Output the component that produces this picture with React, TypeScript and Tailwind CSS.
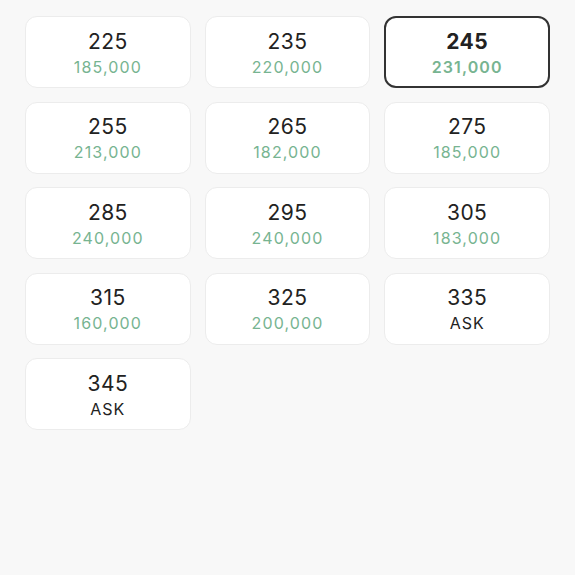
const sizes: { size: string; price: string | null; active?: boolean }[] = [
  { size: "225", price: "185,000" },
  { size: "235", price: "220,000" },
  { size: "245", price: "231,000", active: true },
  { size: "255", price: "213,000" },
  { size: "265", price: "182,000" },
  { size: "275", price: "185,000" },
  { size: "285", price: "240,000" },
  { size: "295", price: "240,000" },
  { size: "305", price: "183,000" },
  { size: "315", price: "160,000" },
  { size: "325", price: "200,000" },
  { size: "335", price: null },
  { size: "345", price: null },
];

function SizeCard({ size, price, active }: { size: string; price: string | null; active?: boolean }) {
  return (
    <button
      className={
        active
          ? "flex h-[72px] flex-col items-center justify-center rounded-[12px] border-2 border-[#333333] bg-white pt-[2px]"
          : "flex h-[72px] flex-col items-center justify-center rounded-[12px] border border-[#ececec] bg-white pt-[2px]"
      }
    >
      <span
        className={
          active
            ? "text-[21px] leading-[26px] font-bold tracking-[0.02em] text-[#222222]"
            : "text-[21px] leading-[26px] tracking-[0.02em] text-[#222222]"
        }
      >
        {size}
      </span>
      {price ? (
        <span
          className={
            active
              ? "mt-px text-[16px] leading-[22px] font-semibold tracking-[0.07em] text-[#77b491]"
              : "mt-px text-[16px] leading-[22px] tracking-[0.07em] text-[#77b491]"
          }
        >
          {price}
        </span>
      ) : (
        <span className="mt-px text-[16px] leading-[22px] tracking-[0.06em] text-[#222222]">ASK</span>
      )}
    </button>
  );
}

export default function App() {
  return (
    <div className="min-h-[575px] w-full bg-[#f8f8f8] px-[25px] pt-[16px] font-['Inter',sans-serif]">
      <div className="grid grid-cols-3 gap-x-[14px] gap-y-[13.5px]">
        {sizes.map((s) => (
          <SizeCard key={s.size} {...s} />
        ))}
      </div>
    </div>
  );
}
